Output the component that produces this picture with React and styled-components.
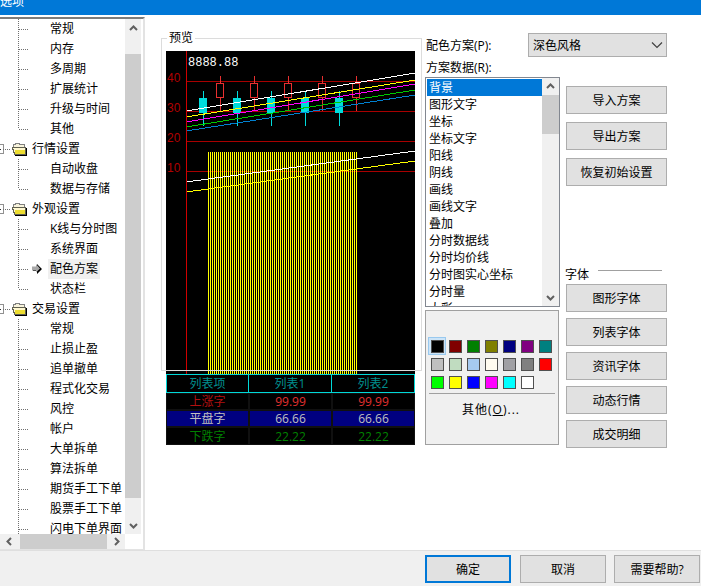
import styled, { createGlobalStyle } from 'styled-components'

const GlobalStyle = createGlobalStyle`
  html, body {
    margin: 0;
    background: #fff;
    width: 701px;
    height: 586px;
    overflow: hidden;
  }
  body {
    font-family: "Open Sans", "Noto Sans CJK SC", sans-serif;
    font-size: 12px;
    color: #000;
  }
`

const TREE = [
  { label: '常规' },
  { label: '内存' },
  { label: '多周期' },
  { label: '扩展统计' },
  { label: '升级与时间' },
  { label: '其他', last: true },
  { label: '行情设置', group: true },
  { label: '自动收盘' },
  { label: '数据与存储', last: true },
  { label: '外观设置', group: true },
  { label: 'K线与分时图' },
  { label: '系统界面' },
  { label: '配色方案', selected: true },
  { label: '状态栏', last: true },
  { label: '交易设置', group: true },
  { label: '常规' },
  { label: '止损止盈' },
  { label: '追单撤单' },
  { label: '程式化交易' },
  { label: '风控' },
  { label: '帐户' },
  { label: '大单拆单' },
  { label: '算法拆单' },
  { label: '期货手工下单' },
  { label: '股票手工下单' },
  { label: '闪电下单界面' },
]

const SCHEME_ITEMS = [
  '背景', '图形文字', '坐标', '坐标文字', '阳线', '阴线', '画线', '画线文字', '叠加',
  '分时数据线', '分时均价线', '分时图实心坐标', '分时量', '大彩',
]

const SWATCHES = [
  '#000000', '#800000', '#008000', '#808000', '#000080', '#800080', '#008080',
  '#c0c0c0', '#c0dcc0', '#a6caf0', '#fffbf0', '#a0a0a4', '#808080', '#ff0000',
  '#00ff00', '#ffff00', '#0000ff', '#ff00ff', '#00ffff', '#ffffff',
]

const TABLE_ROWS = [
  { name: '上涨字', a: '99.99', b: '99.99', nameColor: '#b01010', color: '#e03030' },
  { name: '平盘字', a: '66.66', b: '66.66', nameColor: '#c0c0c0', color: '#c0c0c0', bg: '#000080' },
  { name: '下跌字', a: '22.22', b: '22.22', nameColor: '#008000', color: '#008000' },
]

const CYAN_X = [203, 237, 271, 305, 339]
const RED_X = [220, 254, 288, 322, 356]
const TREND = [
  { from: 111, to: 73, color: '#ffffff' },
  { from: 117, to: 80, color: '#ffff00' },
  { from: 122, to: 84, color: '#ff00ff' },
  { from: 127, to: 90, color: '#00c800' },
  { from: 131, to: 95, color: '#0080d0' },
  { from: 182, to: 151, color: '#ffffff' },
  { from: 192, to: 161, color: '#ffff00' },
]

const Chevron = ({ dir = 'up', color = '#606060' }) => {
  const paths = {
    up: 'M1 6 L4.5 2.5 L8 6',
    down: 'M1 3 L4.5 6.5 L8 3',
    left: 'M6 1 L2.5 4.5 L6 8',
    right: 'M3 1 L6.5 4.5 L3 8',
  }
  return (
    <svg width="9" height="9" viewBox="0 0 9 9">
      <path d={paths[dir]} fill="none" stroke={color} strokeWidth="2" />
    </svg>
  )
}

const TreeLines = ({ last }) => (
  <svg width="12" height="20" viewBox="0 0 12 20" shapeRendering="crispEdges">
    <path
      d={`M0.5 0V${last ? 10 : 20}M1 10.5H11`}
      stroke="#707070"
      strokeDasharray="1 1"
      fill="none"
    />
  </svg>
)

const Folder = () => (
  <svg width="15" height="14" viewBox="0 0 15 14" shapeRendering="crispEdges">
    <path d="M1.5 5V2.5H3V1.5H7V2.5H12.5V5" fill="#f8f4dc" stroke="#808080" />
    <path d="M0.5 5.5H13.5V12.5H2.5V10H1.5V7.5H0.5Z" fill="#fff8d0" stroke="#606050" />
    <rect x="3" y="8" width="10" height="4" fill="#ecdc30" />
    <path d="M3 13.5H15M14.5 6V14" stroke="#000" fill="none" />
  </svg>
)

const GroupGlyph = () => (
  <svg width="12" height="20" viewBox="0 0 12 20" shapeRendering="crispEdges">
    <rect x="-7" y="5.5" width="10" height="9" fill="#fff" stroke="#909090" />
    <path d="M-4 10.5H1" stroke="#303030" />
    <path d="M3 10.5H11" stroke="#707070" strokeDasharray="1 1" />
  </svg>
)

const RowArrow = () => (
  <svg width="10" height="12" viewBox="0 0 10 12">
    <path d="M1 4H5V1L10 6L5 11V8H1Z" fill="#000" />
    <path d="M0 3.5H4V1L8 5.5L4 9.5V7.5H0Z" fill="#a8a8a8" />
  </svg>
)

const Chart = () => (
  <ChartSvg width="249" height="323" viewBox="166 51 249 323" xmlns="http://www.w3.org/2000/svg">
    <defs>
      <pattern id="vol" width="2" height="4" patternUnits="userSpaceOnUse">
        <rect width="1" height="4" fill="#ffff00" />
      </pattern>
    </defs>
    <g shapeRendering="crispEdges">
      {[81, 111, 141, 171].map((y) => (
        <line key={y} x1="186" x2="415" y1={y + 0.5} y2={y + 0.5} stroke="#a80000" />
      ))}
      <rect x="208" y="152" width="149" height="222" fill="url(#vol)" />
      {CYAN_X.map((x) => (
        <g key={x}>
          <line x1={x + 0.5} x2={x + 0.5} y1="91" y2="126" stroke="#00dcdc" />
          <rect x={x - 4} y="98" width="8" height="15" fill="#00dcdc" />
        </g>
      ))}
      {RED_X.map((x) => (
        <g key={x}>
          <line x1={x + 0.5} x2={x + 0.5} y1="76" y2="111" stroke="#e83030" />
          <rect x={x - 3.5} y="83.5" width="7" height="14" fill="#000" stroke="#e83030" />
        </g>
      ))}
      {TREND.map((t) => (
        <line key={t.from} x1="186" x2="415" y1={t.from} y2={t.to} stroke={t.color} strokeWidth="1" />
      ))}
      <line x1="186.5" x2="186.5" y1="51" y2="374" stroke="#d00000" />
    </g>
    <text x="188" y="66" fill="#fff" fontFamily="'Liberation Mono', monospace" fontSize="12">8888.88</text>
    {[['40', 82], ['30', 112], ['20', 142], ['10', 172]].map(([t, y]) => (
      <text key={t} x="167" y={y} fill="#b00000" fontFamily="'Liberation Sans', sans-serif" fontSize="12">{t}</text>
    ))}
  </ChartSvg>
)

const App = () => (
  <Page>
    <GlobalStyle />
    <TitleBar><span>选项</span></TitleBar>
    <Body>
      <Sidebar>
        <TreeFrame>
          <TreeTop>
            <Tree>
              {TREE.map((item, i) => (
                <TreeRow key={i}>
                  {item.group ? (
                    <>
                      <GroupGlyph />
                      <Folder />
                      <GroupLabel>{item.label}</GroupLabel>
                    </>
                  ) : (
                    <>
                      <Indent><TreeLines last={item.last} /></Indent>
                      <ArrowSlot>{item.selected && <RowArrow />}</ArrowSlot>
                      <ItemLabel $selected={item.selected}>{item.label}</ItemLabel>
                    </>
                  )}
                </TreeRow>
              ))}
            </Tree>
            <VScroll $width={16}>
              <ScrollCell $size={18}><Chevron dir="up" /></ScrollCell>
              <ScrollThumb $offset={17} $size={444} />
              <ScrollFill />
              <ScrollCell $size={18}><Chevron dir="down" /></ScrollCell>
            </VScroll>
          </TreeTop>
          <HScrollRow>
            <HScroll>
              <HCell><Chevron dir="left" /></HCell>
              <HThumb />
              <ScrollFill />
              <HCell><Chevron dir="right" /></HCell>
            </HScroll>
          </HScrollRow>
        </TreeFrame>
      </Sidebar>

      <Content>
        <GroupBox>
          <GroupLegend>预览</GroupLegend>
          <Preview>
            <Chart />
            <QuoteTable>
              <HeadCell>列表项</HeadCell>
              <HeadCell>列表1</HeadCell>
              <HeadCell>列表2</HeadCell>
              {TABLE_ROWS.map((r) => (
                <QuoteRow key={r.name}>
                  <QuoteCell $bg={r.bg} $color={r.nameColor}>{r.name}</QuoteCell>
                  <QuoteCell $bg={r.bg} $color={r.color}>{r.a}</QuoteCell>
                  <QuoteCell $bg={r.bg} $color={r.color}>{r.b}</QuoteCell>
                </QuoteRow>
              ))}
            </QuoteTable>
          </Preview>
        </GroupBox>

        <RightPane>
          <SchemeRow>
            <SchemeLabel>配色方案(P):</SchemeLabel>
            <Combo>
              <span>深色风格</span>
              <svg width="12" height="8" viewBox="0 0 12 8">
                <path d="M1 1.5 L6 6.5 L11 1.5" fill="none" stroke="#404040" strokeWidth="1.2" />
              </svg>
            </Combo>
          </SchemeRow>
          <Columns>
            <ListCol>
              <ListLabel>方案数据(R):</ListLabel>
              <ListBox>
                <ListItems>
                  {SCHEME_ITEMS.map((t, i) => (
                    <ListItem key={t} $selected={i === 0}>{t}</ListItem>
                  ))}
                </ListItems>
                <VScroll $width={17}>
                  <ScrollCell $size={17}><Chevron dir="up" /></ScrollCell>
                  <ScrollThumb $offset={0} $size={39} />
                  <ScrollFill />
                  <ScrollCell $size={18}><Chevron dir="down" /></ScrollCell>
                </VScroll>
              </ListBox>
              <ColorPanel>
                <SwatchGrid>
                  {SWATCHES.map((c, i) => (
                    <SwatchSlot key={c} $active={i === 0}>
                      <Swatch $color={c} />
                    </SwatchSlot>
                  ))}
                </SwatchGrid>
                <PanelRule />
                <OtherLabel>其他(<u>O</u>)...</OtherLabel>
              </ColorPanel>
            </ListCol>

            <ButtonCol>
              <ButtonStack $gap={8}>
                <Button>导入方案</Button>
                <Button>导出方案</Button>
                <Button>恢复初始设置</Button>
              </ButtonStack>
              <FontHeader>
                <span>字体</span>
                <FontRule />
              </FontHeader>
              <ButtonStack $gap={6}>
                <Button>图形字体</Button>
                <Button>列表字体</Button>
                <Button>资讯字体</Button>
                <Button>动态行情</Button>
                <Button>成交明细</Button>
              </ButtonStack>
            </ButtonCol>
          </Columns>
        </RightPane>
      </Content>
    </Body>
    <Footer>
      <FooterButton $primary>确定</FooterButton>
      <FooterButton $gapLeft={9}>取消</FooterButton>
      <FooterButton $gapLeft={8}>需要帮助?</FooterButton>
    </Footer>
  </Page>
)

export default App

const Page = styled.div`
  width: 701px;
  height: 586px;
  display: flex;
  flex-direction: column;
  overflow: hidden;
  background: #fff;
`

const TitleBar = styled.div`
  height: 15px;
  flex: none;
  background: #0078d7;
  color: #fff;
  display: flex;
  align-items: flex-end;
  padding-bottom: 7px;
  box-sizing: border-box;
  line-height: 12px;
  overflow: hidden;
  span { white-space: nowrap; }
`

const Body = styled.div`
  height: 535px;
  flex: none;
  display: flex;
`

const Sidebar = styled.div`
  width: 145px;
  flex: none;
  padding-top: 2px;
  box-sizing: border-box;
`

const TreeFrame = styled.div`
  height: 533px;
  box-sizing: border-box;
  border-top: 2px solid #7c7c7c;
  border-right: 2px solid #e3e3e3;
  border-bottom: 1px solid #e3e3e3;
  padding-right: 2px;
  display: flex;
  flex-direction: column;
`

const TreeTop = styled.div`
  height: 515px;
  flex: none;
  display: flex;
  overflow: hidden;
`

const Tree = styled.div`
  flex: 1;
  min-width: 0;
  overflow: hidden;
`

const TreeRow = styled.div`
  height: 20px;
  display: flex;
  align-items: center;
  white-space: nowrap;
`

const Indent = styled.span`
  display: flex;
  margin-left: 18px;
`

const ArrowSlot = styled.span`
  width: 18px;
  display: flex;
  align-items: center;
  padding-left: 2px;
  box-sizing: border-box;
`

const ItemLabel = styled.span`
  height: 20px;
  line-height: 20px;
  padding: 0 2px;
  background: ${(p) => (p.$selected ? '#f0f0f0' : 'transparent')};
`

const GroupLabel = styled.span`
  margin-left: 5px;
  line-height: 20px;
`

const VScroll = styled.div`
  width: ${(p) => p.$width}px;
  flex: none;
  background: #f0f0f0;
  display: flex;
  flex-direction: column;
`

const ScrollCell = styled.div`
  height: ${(p) => p.$size}px;
  flex: none;
  display: flex;
  align-items: center;
  justify-content: center;
`

const ScrollThumb = styled.div`
  margin-top: ${(p) => p.$offset}px;
  height: ${(p) => p.$size}px;
  flex: none;
  background: #cdcdcd;
`

const ScrollFill = styled.div`
  flex: 1;
`

const HScrollRow = styled.div`
  height: 15px;
  flex: none;
  display: flex;
`

const HScroll = styled.div`
  width: 125px;
  display: flex;
  background: #f0f0f0;
`

const HCell = styled.div`
  width: 18px;
  flex: none;
  display: flex;
  align-items: center;
  justify-content: center;
`

const HThumb = styled.div`
  margin-left: 2px;
  width: 87px;
  flex: none;
  background: #cdcdcd;
`

const Content = styled.div`
  flex: 1;
  display: flex;
  align-items: flex-start;
  padding-left: 16px;
`

const GroupBox = styled.div`
  position: relative;
  width: 261px;
  height: 333px;
  margin-top: 23px;
  flex: none;
  box-sizing: border-box;
  padding: 13px 0 0 5px;

  &::after {
    content: '';
    position: absolute;
    inset: 0;
    border: 1px solid #dcdcdc;
    pointer-events: none;
  }
`

const GroupLegend = styled.span`
  position: absolute;
  z-index: 1;
  top: -7px;
  left: 6px;
  padding: 0 2px;
  background: #fff;
  line-height: 14px;
`

const Preview = styled.div`
  width: 249px;
  background: #000;
`

const ChartSvg = styled.svg`
  display: block;
`

const QuoteTable = styled.div`
  display: grid;
  grid-template-columns: repeat(3, 83px);
  grid-template-rows: 19px 17px 17px 18px;
`

const HeadCell = styled.div`
  border: 1px solid #00d8d8;
  margin-left: -1px;
  &:first-child { margin-left: 0; }
  color: #009090;
  display: flex;
  align-items: center;
  justify-content: center;
  line-height: 17px;
`

const QuoteRow = styled.div`
  display: contents;
`

const QuoteCell = styled.div`
  border: 1px solid #101010;
  background: ${(p) => p.$bg || '#000'};
  color: ${(p) => p.$color};
  display: flex;
  align-items: center;
  justify-content: center;
  line-height: 15px;
`

const RightPane = styled.div`
  margin-left: 3px;
  width: 242px;
  flex: none;
  padding-top: 18px;
`

const SchemeRow = styled.div`
  display: flex;
  align-items: center;
  height: 24px;
`

const SchemeLabel = styled.div`
  width: 103px;
  padding-left: 1px;
  box-sizing: border-box;
`

const Combo = styled.div`
  width: 139px;
  height: 24px;
  box-sizing: border-box;
  border: 1px solid #adadad;
  background: #e1e1e1;
  display: flex;
  align-items: center;
  justify-content: space-between;
  padding: 0 3px 0 4px;
`

const Columns = styled.div`
  display: flex;
  align-items: flex-start;
`

const ListCol = styled.div`
  width: 135px;
  flex: none;
  padding-top: 2px;
`

const ListLabel = styled.div`
  height: 18px;
  line-height: 18px;
  padding-left: 1px;
`

const ListBox = styled.div`
  height: 230px;
  box-sizing: border-box;
  border: 1px solid #828790;
  background: #fff;
  display: flex;
  overflow: hidden;
`

const ListItems = styled.div`
  flex: 1;
  min-width: 0;
  padding: 1px 0 0 1px;
`

const ListItem = styled.div`
  height: 17px;
  line-height: 17px;
  padding-left: 2px;
  background: ${(p) => (p.$selected ? '#0078d7' : 'transparent')};
  color: ${(p) => (p.$selected ? '#fff' : '#000')};
`

const ColorPanel = styled.div`
  margin-top: 3px;
  width: 134px;
  height: 135px;
  box-sizing: border-box;
  border: 1px solid #a0a0a0;
  background: #f0f0f0;
  padding: 26px 3px 0 2px;
  display: flex;
  flex-direction: column;
`

const SwatchGrid = styled.div`
  display: grid;
  grid-template-columns: repeat(7, 18px);
  grid-auto-rows: 18px;
`

const SwatchSlot = styled.div`
  width: 18px;
  height: 18px;
  box-sizing: border-box;
  display: flex;
  align-items: center;
  justify-content: center;
  background: ${(p) => (p.$active ? '#cce4f7' : 'transparent')};
  border: 1px solid ${(p) => (p.$active ? '#99c9ef' : 'transparent')};
`

const Swatch = styled.div`
  width: 13px;
  height: 13px;
  flex: none;
  box-sizing: border-box;
  border: 1px solid #505050;
  background: ${(p) => p.$color};
`

const PanelRule = styled.div`
  margin: 2px 0 0 1px;
  height: 1px;
  width: 126px;
  background: #a0a0a0;
`

const OtherLabel = styled.div`
  width: 126px;
  margin-top: 8px;
  text-align: center;
  line-height: 16px;
  letter-spacing: 1px;
`

const ButtonCol = styled.div`
  margin-left: 6px;
  width: 101px;
  flex: none;
  padding-top: 29px;
`

const ButtonStack = styled.div`
  display: flex;
  flex-direction: column;
  gap: ${(p) => p.$gap}px;
`

const Button = styled.button`
  width: 101px;
  height: 28px;
  padding: 0;
  box-sizing: border-box;
  border: 1px solid #adadad;
  border-radius: 0;
  background: #e1e1e1;
  color: #000;
  font: inherit;
`

const FontHeader = styled.div`
  margin-top: 78px;
  height: 20px;
  display: flex;
  align-items: center;
  margin-left: -1px;
  gap: 9px;
`

const FontRule = styled.div`
  width: 64px;
  height: 1px;
  margin-bottom: 8px;
  background: #a0a0a0;
`

const Footer = styled.div`
  flex: 1;
  box-sizing: border-box;
  border-top: 1px solid #dfdfdf;
  background: #f0f0f0;
  display: flex;
  justify-content: flex-end;
  align-items: flex-start;
  padding: 4px 1px 0 0;
`

const FooterButton = styled.button`
  width: 86px;
  height: 28px;
  margin-left: ${(p) => p.$gapLeft || 0}px;
  padding: 0;
  box-sizing: border-box;
  border: ${(p) => (p.$primary ? '2px solid #0078d7' : '1px solid #adadad')};
  border-radius: 0;
  background: #e1e1e1;
  color: #000;
  font: inherit;
`
